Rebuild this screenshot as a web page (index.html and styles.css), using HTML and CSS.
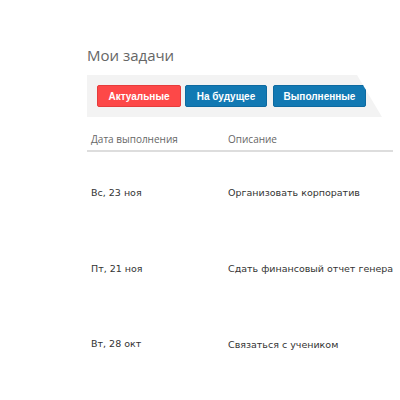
FILE: index.html
```html
<!DOCTYPE html>
<html lang="ru">
<head>
<meta charset="utf-8">
<link rel="stylesheet" href="styles.css">
</head>
<body>
<div class="page">
  <h1 class="title">Мои задачи</h1>
  <div class="tabs">
    <button class="tab tab-red">Актуальные</button>
    <button class="tab tab-blue tab-future">На будущее</button>
    <button class="tab tab-blue tab-done">Выполненные</button>
  </div>
  <div class="table">
    <div class="head">
      <div class="col-date">Дата выполнения</div>
      <div class="col-desc">Описание</div>
    </div>
    <div class="row">
      <div class="col-date">Вс, 23 ноя</div>
      <div class="col-desc">Организовать корпоратив</div>
    </div>
    <div class="row">
      <div class="col-date">Пт, 21 ноя</div>
      <div class="col-desc">Сдать финансовый отчет генеральному директору</div>
    </div>
    <div class="row">
      <div class="col-date">Вт, 28 окт</div>
      <div class="col-desc"><span class="clip">Связаться с учеником</span></div>
    </div>
  </div>
</div>
</body>
</html>
```

FILE: styles.css
```css
html, body {
  margin: 0;
  padding: 0;
  background: #fff;
  width: 400px;
  height: 400px;
  overflow: hidden;
}
.page {
  padding: 44px 0 0 87px;
  font-family: "Open Sans", sans-serif;
}
.title {
  margin: 0;
  font-size: 15px;
  font-weight: 400;
  line-height: 22px;
  color: #666;
}
.tabs {
  margin-top: 9px;
  width: 295px;
  height: 42px;
  box-sizing: border-box;
  padding: 10px 0 0 10px;
  background: #f3f3f3;
  display: flex;
  align-items: flex-start;
  gap: 4px;
  clip-path: polygon(0 0, calc(100% - 25px) 0, 100% 100%, 0 100%);
}
.tab {
  height: 22px;
  margin: 0;
  padding: 0;
  border-radius: 2px;
  font-family: "Liberation Sans", Arial, sans-serif;
  font-weight: 700;
  font-size: 10px;
  color: #fff;
  cursor: pointer;
}
.tab-red {
  width: 84px;
  background: #fd4848;
  border: 1px solid #e63c3c;
}
.tab-blue {
  background: #1279b3;
  border: 1px solid #0e6aa0;
}
.tab-future { width: 82px; }
.tab-done { width: 93px; margin-left: 2px; }
.table {
  width: 306px;
}
.head {
  display: flex;
  height: 35px;
  align-items: flex-end;
  padding-bottom: 4px;
  line-height: 14px;
  border-bottom: 2px solid #ddd;
  font-size: 10px;
  color: #666;
  box-sizing: border-box;
}
.head .col-date, .row .col-date {
  width: 137px;
  padding-left: 4px;
  flex: none;
}
.col-desc {
  flex: 1;
  white-space: nowrap;
  overflow: hidden;
}
.row {
  display: flex;
  align-items: center;
  height: 75.5px;
  font-family: "DejaVu Sans", Verdana, sans-serif;
  font-size: 9.5px;
  color: #333;
}
.row:nth-child(2) { margin-top: 3px; }
.clip {
  display: inline-block;
  width: 111px;
  overflow: hidden;
  white-space: nowrap;
  vertical-align: middle;
}
```
